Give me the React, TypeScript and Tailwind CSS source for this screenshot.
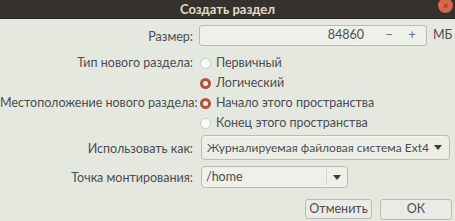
import React from "react";

function Radio({ checked }: { checked?: boolean }) {
  return checked ? (
    <span className="inline-block w-[11px] h-[11px] rounded-full border-[3px] border-[#b5533a] bg-[#f4efe6] shrink-0" />
  ) : (
    <span className="inline-block w-[11px] h-[11px] rounded-full border border-[#c9ccc8] bg-[#fbfcfa] shrink-0" />
  );
}

function Arrow() {
  return (
    <svg width="8" height="5" viewBox="0 0 8 5" className="shrink-0">
      <path d="M0 0 L8 0 L4 5 Z" fill="#3c3c40" />
    </svg>
  );
}

export default function App() {
  const label = "w-[194px] shrink-0 text-right pr-[1px] whitespace-nowrap";
  return (
    <div
      className="w-[455px] h-[221px] overflow-hidden bg-[#e4e8de] text-[#4b4c55] text-[12.5px] leading-none whitespace-nowrap"
      style={{ fontFamily: 'Lato, "Noto Sans", sans-serif' }}
    >
      {/* title bar */}
      <div className="relative h-[19px] bg-[#35322e] flex items-center justify-center border-b border-[#242220]">
        <span className="font-bold text-[13px] text-[#e2dcc4]">Создать раздел</span>
        <span className="absolute right-[2px] top-[-2px] w-[15px] h-[15px] rounded-full bg-[#d9674c] flex items-center justify-center text-[#8a3a28] text-[9px] font-bold">
          ×
        </span>
      </div>

      <div className="flex flex-col pt-[6px]">
        {/* size */}
        <div className="flex items-center h-[21px]">
          <div className={label + " pt-[4px]"}>Размер:</div>
          <div className="ml-[5px] w-[228px] h-[21px] flex items-center border border-[#b9bcb6] rounded-[3px] bg-[#eef0ea]">
            <span className="flex-1 text-right pr-[19px]">84860</span>
            <span className="w-[12px] text-center text-[#6a6a70]">−</span>
            <span className="w-[12px] ml-[11px] text-center text-[#6a6a70]">+</span>
            <span className="w-[8px]" />
          </div>
          <span className="ml-[6px]">МБ</span>
        </div>

        {/* type */}
        <div className="flex items-center h-[20px] mt-[7px]">
          <div className={label}>Тип нового раздела:</div>
          <div className="ml-[6px] flex items-center gap-[5px]">
            <Radio />
            <span>Первичный</span>
          </div>
        </div>
        <div className="flex items-center h-[20px]">
          <div className={label}></div>
          <div className="ml-[6px] flex items-center gap-[5px]">
            <Radio checked />
            <span>Логический</span>
          </div>
        </div>

        {/* location */}
        <div className="flex items-center h-[20px]">
          <div className={label}>Местоположение нового раздела:</div>
          <div className="ml-[6px] flex items-center gap-[5px]">
            <Radio checked />
            <span>Начало этого пространства</span>
          </div>
        </div>
        <div className="flex items-center h-[20px]">
          <div className={label}></div>
          <div className="ml-[6px] flex items-center gap-[5px]">
            <Radio />
            <span>Конец этого пространства</span>
          </div>
        </div>

        {/* use as */}
        <div className="flex items-center h-[25px] mt-[2px]">
          <div className={label + " pt-[4px]"}>Использовать как:</div>
          <div className="ml-[7px] w-[249px] h-[25px] flex items-center border border-[#b9bcb6] rounded-[4px] bg-[#eceee6] pl-[5px] pr-[7px] shadow-[0_1px_0_#f6f7f3_inset]">
            <span className="flex-1 text-[12px]">Журналируемая файловая система Ext4</span>
            <Arrow />
          </div>
        </div>

        {/* mount point */}
        <div className="flex items-center h-[22px] mt-[6px]">
          <div className={label + " pt-[3px]"}>Точка монтирования:</div>
          <div className="ml-[7px] w-[147px] h-[22px] flex items-center border border-[#b9bcb6] rounded-[4px] bg-[#eef0e9]">
            <span className="flex-1 pl-[4px]">/home</span>
            <span className="w-px h-[16px] bg-[#d2d4ce]" />
            <span className="w-[20px] flex justify-center">
              <Arrow />
            </span>
          </div>
        </div>

        {/* buttons */}
        <div className="flex h-[20px] mt-[11px] pl-[305px] gap-[8px]">
          <div className="w-[67px] h-[20px] border border-[#b9bcb6] rounded-[3px] bg-[#e9ebe4] flex items-center justify-center">
            Отменить
          </div>
          <div className="w-[72px] h-[21px] border border-[#b9bcb6] rounded-[3px] bg-[#e9ebe4] flex items-center justify-center">
            ОК
          </div>
        </div>
      </div>
    </div>
  );
}
